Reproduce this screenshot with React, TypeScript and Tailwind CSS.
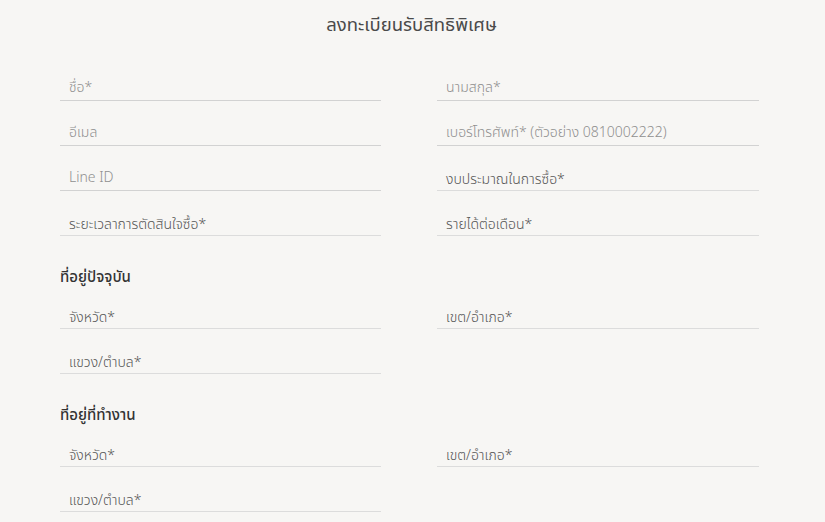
const font = { fontFamily: '"Noto Sans Thai", "Noto Sans", "Liberation Sans", sans-serif' };

function TextField({ label }: { label: string }) {
  return (
    <div className="h-[45px] flex items-end border-b border-[#d2d2d2]">
      <input
        placeholder={label}
        className="w-full bg-transparent pl-[9px] pb-[2px] text-[14px] leading-[20px] font-light text-[#555] placeholder:text-[#8f8f8f] outline-none"
      />
    </div>
  );
}

function SelectField({ label }: { label: string }) {
  return (
    <div className="h-[45px] flex items-end border-b border-[#dcdcdc]">
      <div className="pl-[9px] text-[14px] leading-[20px] font-light text-[#555]">{label}</div>
    </div>
  );
}

function Heading({ children }: { children: string }) {
  return (
    <div className="col-span-2 h-[48px] pt-[34px]">
      <div className="text-[15px] leading-none font-medium text-[#333]">{children}</div>
    </div>
  );
}

export default function App() {
  return (
    <div className="min-h-screen w-full bg-[#f7f6f4]" style={font}>
      <div className="h-[56px] pb-[4px] flex items-center justify-center">
        <h1 className="text-[18.5px] text-[#4a4a4a] translate-x-[-1px]">ลงทะเบียนรับสิทธิพิเศษ</h1>
      </div>
      <form className="pl-[60px] grid grid-cols-[321px_322px] gap-x-[56px] w-[759px]">
        <TextField label="ชื่อ*" />
        <TextField label="นามสกุล*" />
        <TextField label="อีเมล" />
        <TextField label="เบอร์โทรศัพท์* (ตัวอย่าง 0810002222)" />
        <TextField label="Line ID" />
        <SelectField label="งบประมาณในการซื้อ*" />
        <SelectField label="ระยะเวลาการตัดสินใจซื้อ*" />
        <SelectField label="รายได้ต่อเดือน*" />

        <Heading>ที่อยู่ปัจจุบัน</Heading>
        <SelectField label="จังหวัด*" />
        <SelectField label="เขต/อำเภอ*" />
        <SelectField label="แขวง/ตำบล*" />
        <div />

        <Heading>ที่อยู่ที่ทำงาน</Heading>
        <SelectField label="จังหวัด*" />
        <SelectField label="เขต/อำเภอ*" />
        <SelectField label="แขวง/ตำบล*" />
        <div />
      </form>
    </div>
  );
}
